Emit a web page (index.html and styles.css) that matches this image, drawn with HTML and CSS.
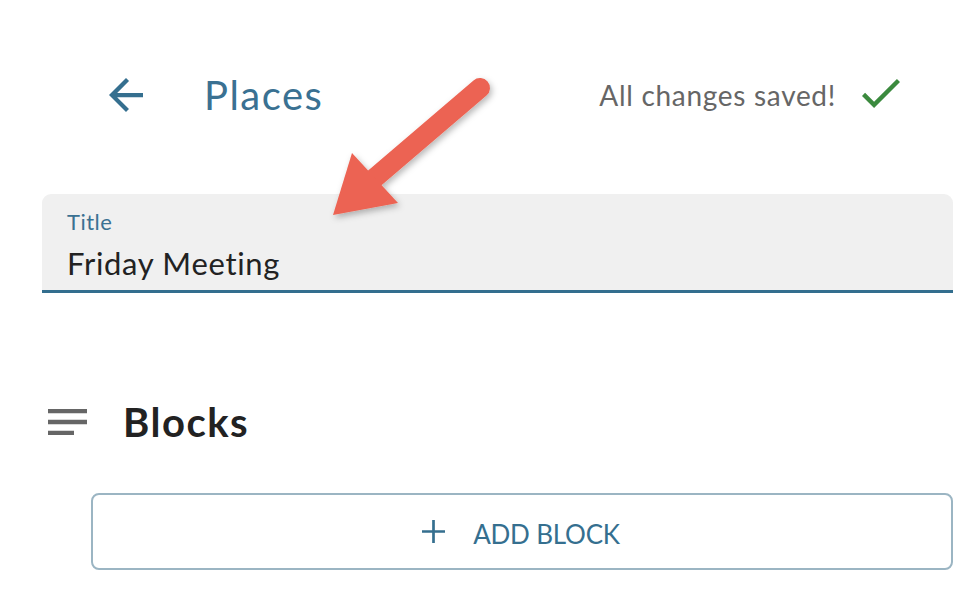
FILE: index.html
```html
<!DOCTYPE html>
<html>
<head>
<meta charset="utf-8">
<link rel="stylesheet" href="styles.css">
</head>
<body>
<div class="page">
  <header class="header">
    <svg class="back" viewBox="4 4 16 16" width="34" height="34"><path d="M20 11H7.83l5.59-5.59L12 4l-8 8 8 8 1.41-1.41L7.83 13H20v-2z" fill="#356f8f"/></svg>
    <h1 class="place">Places</h1>
    <span class="saved">All changes saved!</span>
    <svg class="check" viewBox="3.41 5.59 17.59 13.41" width="38" height="29"><path d="M9 16.17L4.83 12l-1.42 1.41L9 19 21 7l-1.41-1.41z" fill="#3b8a3e"/></svg>
  </header>

  <div class="field">
    <div class="label">Title</div>
    <div class="value">Friday Meeting</div>
  </div>

  <div class="blocks-row">
    <svg class="notes" viewBox="3 6 18 12" width="39" height="26"><path d="M3 18h12v-2H3v2zM3 6v2h18V6H3zm0 7h18v-2H3v2z" fill="#666"/></svg>
    <h2 class="blocks">Blocks</h2>
  </div>

  <button class="add">
    <svg class="plus" viewBox="0 0 24 24" width="23" height="23"><path d="M10.6 0h2.8v24h-2.8zM0 10.6h24v2.8H0z" fill="#356f8f"/></svg>
    <span class="add-text">ADD BLOCK</span>
  </button>

  <svg class="pointer" width="970" height="606" viewBox="0 0 970 606">
    <defs>
      <filter id="sh" x="-20%" y="-20%" width="140%" height="140%">
        <feDropShadow dx="2" dy="3" stdDeviation="3" flood-color="#000" flood-opacity="0.28"/>
      </filter>
    </defs>
    <g filter="url(#sh)" fill="#ec6352">
      <line x1="480" y1="88" x2="370" y2="182" stroke="#ec6352" stroke-width="20" stroke-linecap="round"/>
      <polygon points="352,153 333,215 398,203"/>
    </g>
  </svg>
</div>
</body>
</html>
```

FILE: styles.css
```css
* { box-sizing: border-box; }
html, body { margin: 0; padding: 0; background: #fff; }
body { font-family: Lato, "Open Sans", sans-serif; }
.page { position: relative; width: 970px; height: 606px; overflow: hidden; padding-top: 65px; }

.header { display: flex; align-items: center; height: 60px; padding: 0 70px 0 109px; }
.back { flex: none; display: block; }
.place { margin: 0 0 0 61px; font-size: 40px; letter-spacing: 1.5px; font-weight: 400; color: #3a7192; line-height: 1; flex: 1; }
.saved { font-size: 28px; letter-spacing: 0.7px; color: #666; line-height: 1; }
.check { flex: none; margin-left: 26px; display: block; margin-top: -4px; }

.field { margin: 69px 17px 0 42px; height: 99px; background: #f0f0f0; border-radius: 9px 9px 0 0; border-bottom: 3px solid #336e8e; padding: 15px 0 0 25px; }
.label { font-size: 22px; letter-spacing: 0.5px; color: #3a7192; line-height: 26px; }
.value { font-size: 31px; letter-spacing: 0.7px; color: #222; line-height: 38px; margin-top: 9px; }

.blocks-row { display: flex; align-items: center; margin: 106px 0 0 48px; height: 46px; }
.notes { display: block; flex: none; }
.blocks { margin: 0 0 0 36px; font-size: 40px; letter-spacing: 1.5px; font-weight: 700; color: #222; line-height: 1; }

.add { display: flex; align-items: center; justify-content: center; gap: 28px; margin: 48px 17px 0 91px; width: calc(100% - 108px); height: 77px; border: 2px solid #9bb5c3; border-radius: 8px; background: #fff; font-family: Lato, "Open Sans", sans-serif; font-size: 26px; letter-spacing: -0.2px; color: #356f8f; padding: 0 2px 0 0; }
.plus { display: block; flex: none; }
.add-text { padding-top: 4px; }

.pointer { position: absolute; left: 0; top: 0; pointer-events: none; }
```
